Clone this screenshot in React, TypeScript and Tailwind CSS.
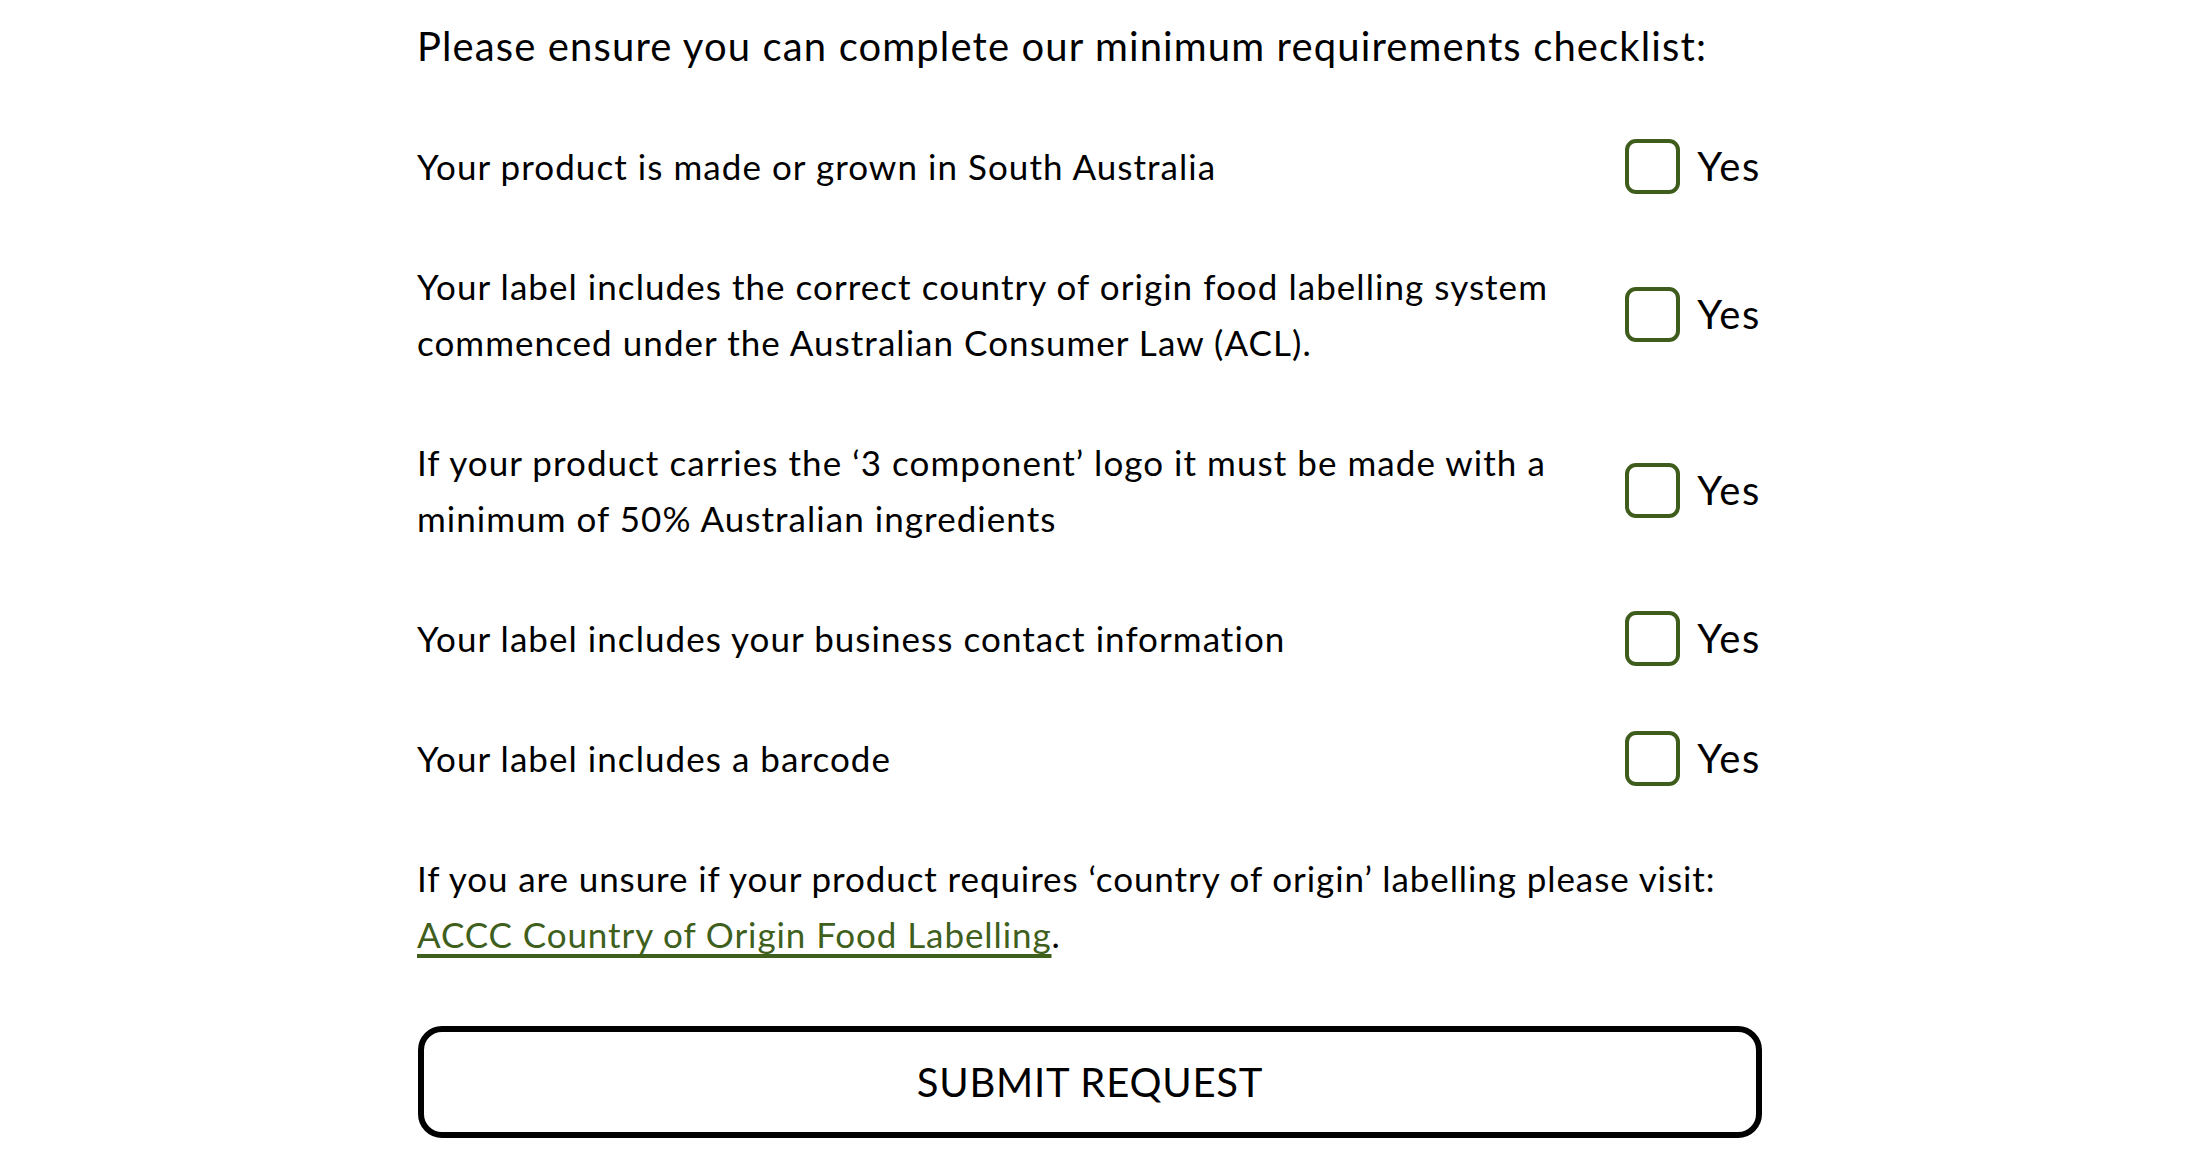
import React from "react";

const rows: string[][] = [
  ["Your product is made or grown in South Australia"],
  [
    "Your label includes the correct country of origin food labelling system",
    "commenced under the Australian Consumer Law (ACL).",
  ],
  [
    "If your product carries the \u20183 component\u2019 logo it must be made with a",
    "minimum of 50% Australian ingredients",
  ],
  ["Your label includes your business contact information"],
  ["Your label includes a barcode"],
];

export default function App() {
  return (
    <div
      className="min-h-[1176px] w-full bg-white text-black"
      style={{ fontFamily: "Lato, 'Open Sans', sans-serif" }}
    >
      <div className="ml-[417px] w-[1344px] pt-[18px] flex flex-col gap-[64px]">
        <p className="text-[40px] leading-[56px] tracking-[0.028em] whitespace-nowrap">
          Please ensure you can complete our minimum requirements checklist:
        </p>
        {rows.map((lines, i) => (
          <div key={i} className="flex items-center justify-between">
            <p className="w-[1180px] text-[35px] leading-[56px] tracking-[0.03em]">
              {lines.map((l, j) => (
                <span key={j} className="block whitespace-nowrap">
                  {l}
                </span>
              ))}
            </p>
            <label className="flex items-center gap-[17px]">
              <span className="block w-[55px] h-[55px] rounded-[11px] border-[4px] border-[#3e5c1b] bg-white" />
              <span className="text-[40px] leading-[56px] tracking-[0.04em]">Yes</span>
            </label>
          </div>
        ))}
        <p className="text-[35px] leading-[56px] tracking-[0.026em] whitespace-nowrap">
          If you are unsure if your product requires &lsquo;country of origin&rsquo; labelling please visit:
          <br />
          <a
            href="#"
            className="text-[#3f5f1d] underline decoration-[4px] underline-offset-[6px]"
          >
            ACCC Country of Origin Food Labelling
          </a>
          .
        </p>
      </div>
      <div className="ml-[418px] w-[1344px] mt-[64px]">
        <button className="w-full h-[112px] border-[6px] border-black rounded-[24px] bg-white text-[40px] tracking-[0.02em]">
          SUBMIT REQUEST
        </button>
      </div>
    </div>
  );
}
